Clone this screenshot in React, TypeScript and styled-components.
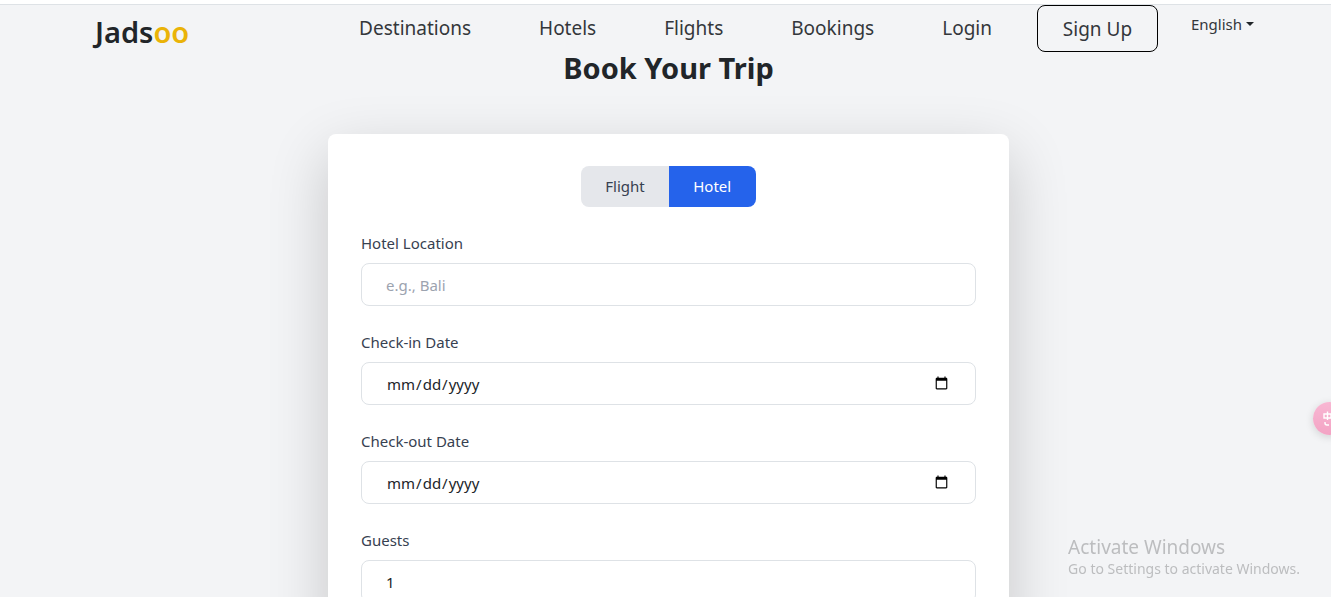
import React, { useState } from "react";
import styled, { createGlobalStyle } from "styled-components";

const GlobalStyle = createGlobalStyle`
  *, *::before, *::after { box-sizing: border-box; }
  body {
    margin: 0;
    background: #f3f4f6;
    color: #212529;
    font-family: "Noto Sans", "Open Sans", sans-serif;
    font-size: 15px;
    line-height: 24px;
  }
  button, input { font: inherit; color: inherit; }
`;

const TopStrip = styled.div`
  height: 5px;
  background: #ffffff;
  border-bottom: 1px solid #dee2e6;
`;

const Header = styled.header`
  display: flex;
  justify-content: space-between;
  align-items: flex-start;
  height: 45px;
  padding: 0 77px 0 95px;
`;

const Logo = styled.a`
  color: #212529;
  font-size: 29px;
  font-weight: 600;
  line-height: 36px;
  padding-top: 9px;
  text-decoration: none;
`;

const LogoAccent = styled.span`
  color: #eab308;
`;

const Nav = styled.nav`
  display: flex;
  align-items: flex-start;
`;

const NavLinks = styled.div`
  display: flex;
  gap: 68px;
  margin-right: 45px;
`;

const NavLink = styled.a`
  color: #34373b;
  font-size: 19px;
  line-height: 46px;
  text-decoration: none;
`;

const SignUpButton = styled.button`
  width: 121px;
  height: 47px;
  margin-right: 33px;
  padding: 0;
  border: 1px solid #000000;
  border-radius: 8px;
  background: transparent;
  color: #34373b;
  font-size: 19px;
`;

const LanguageButton = styled.button`
  display: flex;
  align-items: center;
  gap: 4px;
  padding: 7px 0 0;
  border: 0;
  background: transparent;
  color: #34373b;
`;

const Caret = styled.span`
  border: 4px solid transparent;
  border-top-color: #212529;
  border-bottom: 0;
`;

const Main = styled.main`
  display: flex;
  flex-direction: column;
  align-items: center;
  padding-left: 6px;
`;

const Title = styled.h1`
  margin: 0 0 48px;
  font-size: 29px;
  font-weight: 700;
  line-height: 36px;
`;

const Card = styled.form`
  width: 100%;
  max-width: 681px;
  padding: 32px 33px;
  border-radius: 8px;
  background: #ffffff;
  box-shadow: 0 20px 60px rgba(0, 0, 0, 0.19);
  display: flex;
  flex-direction: column;
  gap: 24px;
`;

const Tabs = styled.div`
  display: flex;
  align-self: center;
  border-radius: 8px;
  overflow: hidden;
`;

const Tab = styled.button<{ $active: boolean }>`
  min-width: 87px;
  height: 41px;
  padding: 0 24px 2px;
  border: 0;
  background: ${(p) => (p.$active ? "#2563eb" : "#e5e7eb")};
  color: ${(p) => (p.$active ? "#ffffff" : "#374151")};
`;

const Field = styled.div`
  display: flex;
  flex-direction: column;
  gap: 8px;
`;

const Label = styled.label`
  color: #374151;
`;

const Input = styled.input`
  width: 100%;
  height: 43px;
  padding: 0 24px;
  border: 1px solid #dee2e6;
  border-radius: 8px;
  background: #ffffff;
  color: #212529;
  &::placeholder { color: #9ca3af; opacity: 1; }
`;

const Watermark = styled.aside`
  position: fixed;
  right: 31px;
  bottom: 17px;
  color: #bcbdbf;
  font-size: 14px;
  line-height: 22px;
  pointer-events: none;
`;

const WatermarkTitle = styled.div`
  font-size: 19px;
`;

const FloatingButton = styled.button`
  position: fixed;
  right: -15px;
  top: 402px;
  width: 33px;
  height: 33px;
  padding: 0 0 0 9px;
  border: 0;
  border-radius: 50%;
  background: linear-gradient(#f8b7d3, #f3a3c4);
  box-shadow: 0 2px 8px rgba(0, 0, 0, 0.14);
  display: flex;
  align-items: center;
`;

const links = ["Destinations", "Hotels", "Flights", "Bookings", "Login"];

export default function App() {
  const [tab, setTab] = useState("Hotel");
  return (
    <>
      <GlobalStyle />
      <TopStrip />
      <Header>
        <Logo href="#">
          Jads<LogoAccent>oo</LogoAccent>
        </Logo>
        <Nav>
          <NavLinks>
            {links.map((l) => (
              <NavLink key={l} href={`#${l.toLowerCase()}`}>{l}</NavLink>
            ))}
          </NavLinks>
          <SignUpButton type="button">Sign Up</SignUpButton>
          <LanguageButton type="button">
            English
            <Caret />
          </LanguageButton>
        </Nav>
      </Header>
      <Main>
        <Title>Book Your Trip</Title>
        <Card>
          <Tabs>
            {["Flight", "Hotel"].map((t) => (
              <Tab key={t} type="button" $active={tab === t} onClick={() => setTab(t)}>
                {t}
              </Tab>
            ))}
          </Tabs>
          <Field>
            <Label htmlFor="location">Hotel Location</Label>
            <Input id="location" type="text" placeholder="e.g., Bali" />
          </Field>
          <Field>
            <Label htmlFor="checkin">Check-in Date</Label>
            <Input id="checkin" type="date" />
          </Field>
          <Field>
            <Label htmlFor="checkout">Check-out Date</Label>
            <Input id="checkout" type="date" />
          </Field>
          <Field>
            <Label htmlFor="guests">Guests</Label>
            <Input id="guests" type="number" min={1} defaultValue={1} />
          </Field>
        </Card>
      </Main>
      <Watermark>
        <WatermarkTitle>Activate Windows</WatermarkTitle>
        <div>Go to Settings to activate Windows.</div>
      </Watermark>
      <FloatingButton type="button" aria-label="Translate">
        <svg width="16" height="20" viewBox="0 0 16 20" fill="none" stroke="#ffffff" strokeWidth="1.4">
          <path d="M2 5h7v4h-7zM5.5 2.5v8.5M3 13v1q0 2 2 2h2" />
        </svg>
      </FloatingButton>
    </>
  );
}
